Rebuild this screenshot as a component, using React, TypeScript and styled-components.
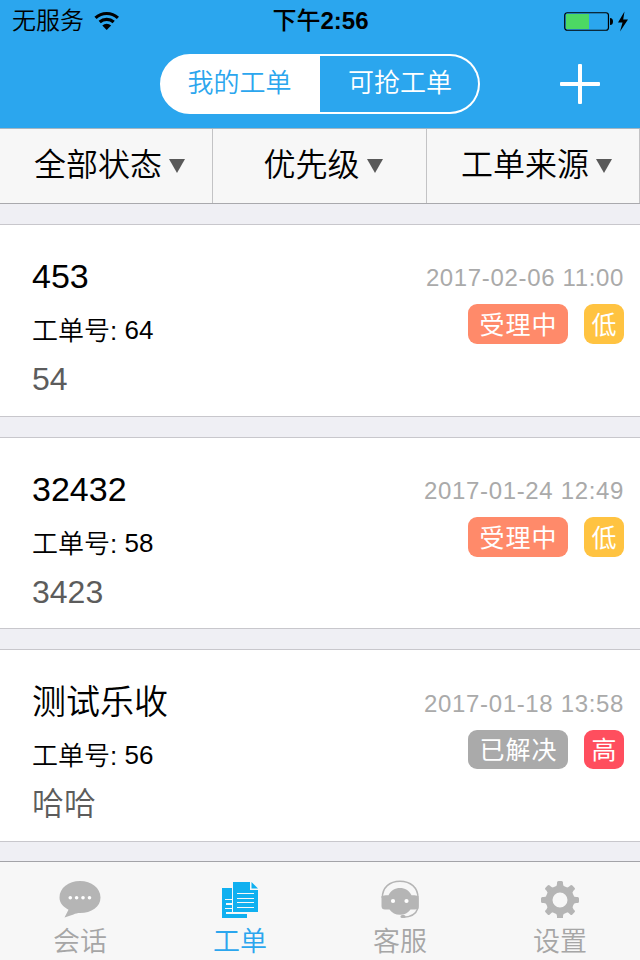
import React from "react";
import styled, { createGlobalStyle } from "styled-components";

const GlobalStyle = createGlobalStyle`
  * { box-sizing: border-box; }
  body {
    margin: 0;
    background: #efeff4;
    font-family: "Liberation Sans", "Noto Sans CJK SC", sans-serif;
    font-weight: 350;
  }
`;

const Screen = styled.div`
  width: 640px;
  height: 960px;
  overflow: hidden;
  display: flex;
  flex-direction: column;
  background: #efeff4;
`;

const Header = styled.header`
  height: 128px;
  flex: none;
  background: #2ba6ee;
`;

const StatusBar = styled.div`
  height: 40px;
  display: grid;
  grid-template-columns: 1fr auto 1fr;
  align-items: center;
  padding: 0 11px 0 12px;
  color: #000;
`;

const Carrier = styled.div`
  display: flex;
  align-items: center;
  gap: 10px;
  font-size: 24px;
  line-height: 40px;
`;

const Clock = styled.div`
  font-size: 24px;
  line-height: 38px;
  padding-bottom: 2px;
  font-weight: 700;
  font-family: "Liberation Sans", sans-serif;
  span {
    font-family: "Noto Sans CJK SC", sans-serif;
    font-weight: 500;
  }
`;

const Power = styled.div`
  display: flex;
  justify-content: flex-end;
  align-items: center;
`;

const NavBar = styled.nav`
  height: 88px;
  display: grid;
  grid-template-columns: 160px 320px 160px;
  align-items: start;
  padding-top: 14px;
`;

const Segments = styled.div`
  grid-column: 2;
  height: 60px;
  display: grid;
  grid-template-columns: 160px 160px;
`;

const Segment = styled.button<{ $active?: boolean }>`
  margin: 0;
  border: 2px solid #fff;
  font: inherit;
  font-size: 26px;
  line-height: 52px;
  background: ${(p) => (p.$active ? "#fff" : "transparent")};
  color: ${(p) => (p.$active ? "#2ba6ee" : "#fff")};
  &:first-child {
    padding: 0 1px 2px 0;
    border-radius: 30px 0 0 30px;
  }
  &:last-child {
    padding: 0 0 2px 2px;
    border-left: 0;
    border-radius: 0 30px 30px 0;
  }
`;

const AddButton = styled.button`
  border: 0;
  background: none;
  padding: 0;
  height: 60px;
  width: 40px;
  margin-left: 80px;
  display: flex;
  align-items: center;
`;

const Filters = styled.div`
  height: 76px;
  flex: none;
  display: grid;
  grid-template-columns: 213px 214px 213px;
  background: #f7f7f7;
  border-top: 1px solid #a5b6c2;
  border-bottom: 1px solid #a9a9ad;
`;

const Filter = styled.button`
  border: 0;
  border-right: 1px solid #c3c3c5;
  background: none;
  padding: 0 0 2px 7px;
  font: inherit;
  font-size: 32px;
  line-height: 68px;
  color: #000;
  display: flex;
  justify-content: center;
  align-items: center;
  gap: 7px;
`;

const Arrow = styled.i`
  width: 0;
  height: 0;
  margin-top: 2px;
  border: 8px solid transparent;
  border-top: 14px solid #595959;
  border-bottom: 0;
`;

const List = styled.main`
  flex: 1;
  display: grid;
  grid-template-rows: 193px 192px 193px;
  row-gap: 20px;
  padding-top: 20px;
`;

const Card = styled.article`
  display: flex;
  justify-content: space-between;
  background: #fff;
  border-top: 1px solid #c8c7cc;
  border-bottom: 1px solid #c8c7cc;
  padding: 30px 16px 0 32px;
`;

const Summary = styled.div`
  flex: none;
`;

const Title = styled.h2`
  margin: 0;
  height: 44px;
  font-size: 34px;
  line-height: 44px;
  font-weight: 350;
  color: #000;
`;

const TicketNo = styled.p`
  margin: 8px 0 0;
  height: 48px;
  font-size: 26px;
  line-height: 48px;
  color: #000;
`;

const Digits = styled.span`
  line-height: 1;
  vertical-align: 1px;
`;

const Detail = styled.p`
  margin: 2px 0 0;
  font-size: 32px;
  line-height: 44px;
  color: #5c5c5c;
`;

const Meta = styled.div`
  display: flex;
  flex-direction: column;
  align-items: flex-end;

  ${Card}:last-child & {
    padding-top: 1px;
  }
`;

const DateText = styled.time`
  font-size: 24px;
  line-height: 44px;
  padding-top: 1px;
  letter-spacing: 0.65px;
  color: #aaa;
`;

const Tags = styled.div`
  display: flex;
  gap: 16px;
  margin-top: 4px;
`;

const Tag = styled.span<{ $color: string; $wide?: boolean }>`
  width: ${(p) => (p.$wide ? 100 : 40)}px;
  height: 40px;
  border-radius: 9px;
  background: ${(p) => p.$color};
  color: #fff;
  font-size: 25px;
  font-weight: 400;
  line-height: 42px;
  letter-spacing: 1px;
  text-indent: 1px;
  text-align: center;

  ${Card}:last-child & {
    height: 39px;
    line-height: 40px;
  }
`;

const TabBar = styled.footer`
  height: 99px;
  flex: none;
  display: grid;
  grid-template-columns: repeat(4, 1fr);
  background: #f7f7f7;
  border-top: 1px solid #a3a3a8;
`;

const Tab = styled.button<{ $active?: boolean }>`
  border: 0;
  background: none;
  padding: 16px 0 0;
  font: inherit;
  font-size: 27px;
  line-height: 36px;
  display: flex;
  flex-direction: column;
  align-items: center;
  justify-content: flex-start;
  gap: 6px;
  color: ${(p) => (p.$active ? "#2ba6ee" : "#a6a6a6")};
  svg { flex: none; }
`;

const WifiIcon = () => (
  <svg width="26" height="20" viewBox="0 0 26 20">
    <g fill="none" stroke="#000" strokeWidth="3.2">
      <path d="M1.500 6.900 A16.500 16.500 0 0 1 23.900 6.900" />
      <path d="M5.700 11 A10.400 10.400 0 0 1 19.700 11" />
    </g>
    <path d="M12.700 19 L8.300 14.500 A6.300 6.300 0 0 1 17.100 14.500 Z" />
  </svg>
);

const BatteryIcon = () => (
  <svg width="65" height="22" viewBox="0 0 65 22">
    <rect x="0.75" y="2.75" width="43.7" height="17.5" rx="2.5" fill="none" stroke="#000" strokeWidth="1.2" />
    <rect x="2" y="4" width="23" height="15" fill="#4cd964" />
    <path d="M46 8 Q49 8 49 11.5 Q49 15 46 15 Z" />
    <path d="M60.5 1.5 L54 12.5 L58.5 12.5 L56 21.5 L64 9.5 L59.2 9.5 Z" />
  </svg>
);

const PlusIcon = () => (
  <svg width="40" height="40" viewBox="0 0 40 40" fill="#fff">
    <rect x="18" width="4" height="40" rx="1" />
    <rect y="18" width="40" height="4" rx="1" />
  </svg>
);

const ChatIcon = () => (
  <svg width="42" height="40" viewBox="0 0 42 40">
    <path
      fill="#b5b5b5"
      d="M21 3 C32.500 3 41.500 10 41.500 19.500 C41.500 29 32.500 35 21 35 C18.500 35 16.500 35.600 14.500 36.400 L5.500 39.500 L9.500 31.800 C4 28.500 0.500 25 0.500 19.500 C0.500 10 9.500 3 21 3 Z"
    />
    <g fill="#fff">
      <circle cx="11.300" cy="19.800" r="1.800" />
      <circle cx="17.600" cy="19.800" r="1.800" />
      <circle cx="24" cy="19.800" r="1.800" />
      <circle cx="30.500" cy="19.800" r="1.800" />
    </g>
  </svg>
);

const TicketIcon = () => (
  <svg width="40" height="40" viewBox="0 0 40 40">
    <path fill="#10b0f0" d="M2 10 H12 V36 H27 V40 H2 Z" />
    <g fill="#f7f7f7">
      <rect x="5" y="21" width="7" height="1" />
      <rect x="6" y="25" width="6" height="2" />
      <rect x="5" y="30" width="7" height="1" />
      <rect x="6" y="34" width="6" height="2" />
    </g>
    <path fill="#10b0f0" d="M13 4 H30 V12 H38 V34 H13 Z M31.500 4 L38 10.500 H31.500 Z" />
    <g fill="#f7f7f7">
      <rect x="17" y="15" width="17" height="1" />
      <rect x="17" y="20" width="17" height="1" />
      <rect x="17" y="24" width="17" height="1" />
      <rect x="17" y="29" width="17" height="1" />
    </g>
  </svg>
);

const AgentIcon = () => (
  <svg width="40" height="40" viewBox="0 0 40 40">
    <path
      fill="none"
      stroke="#b5b5b5"
      strokeWidth="1.500"
      d="M2.300 20 C2.300 9.500 9.500 3.200 20 3.200 C30.500 3.200 38 9.500 38 20 V30 C36 36 30 39.200 23 39.200"
    />
    <path
      fill="#b5b5b5"
      d="M1.500 18 L5.500 17.200 H8.500 C11 12.500 15 10 20 10 C25 10 29 12.500 31.500 17.200 H34.500 L38.500 18 V28 Q38 31.500 35 31.500 H30.500 C28 35 24.500 36.800 20 36.800 C15.500 36.800 12 35 9.500 31.500 H5 Q1.500 31.500 1.500 28 Z"
    />
    <rect x="20.500" y="37" width="5" height="3" rx="1.500" fill="#b5b5b5" />
    <circle cx="13" cy="23" r="2.100" fill="#fff" />
    <circle cx="26.500" cy="23" r="2.100" fill="#fff" />
  </svg>
);

const GearIcon = () => (
  <svg width="40" height="40" viewBox="0 0 40 40">
    <g transform="translate(20 22)" fill="#b5b5b5">
      <path
        fillRule="evenodd"
        d="M0 -14.300 A14.300 14.300 0 1 0 0 14.300 A14.300 14.300 0 1 0 0 -14.300 Z M0 -7.500 A7.500 7.500 0 1 1 0 7.500 A7.500 7.500 0 1 1 0 -7.500 Z"
      />
      {[0, 45, 90, 135, 180, 225, 270, 315].map((angle) => (
        <path
          key={angle}
          transform={`rotate(${angle})`}
          d="M-5.500 -12.500 Q-3 -13.500 -3 -16 V-17.500 Q-3 -19 -1.500 -19 H1.500 Q3 -19 3 -17.500 V-16 Q3 -13.500 5.500 -12.500 Z"
        />
      ))}
    </g>
  </svg>
);

const filters = ["全部状态", "优先级", "工单来源"];

const tickets = [
  { title: "453", no: 64, detail: "54", date: "2017-02-06 11:00", status: "受理中", statusColor: "#ff8a6a", level: "低", levelColor: "#ffc341" },
  { title: "32432", no: 58, detail: "3423", date: "2017-01-24 12:49", status: "受理中", statusColor: "#ff8a6a", level: "低", levelColor: "#ffc341" },
  { title: "测试乐收", no: 56, detail: "哈哈", date: "2017-01-18 13:58", status: "已解决", statusColor: "#aaaaaa", level: "高", levelColor: "#ff4e5e" },
];

const tabs = [
  { label: "会话", Icon: ChatIcon },
  { label: "工单", Icon: TicketIcon, active: true },
  { label: "客服", Icon: AgentIcon },
  { label: "设置", Icon: GearIcon },
];

export default function App() {
  return (
    <>
      <GlobalStyle />
      <Screen>
        <Header>
          <StatusBar>
            <Carrier>
              无服务
              <WifiIcon />
            </Carrier>
            <Clock>
              <span>下午</span>2:56
            </Clock>
            <Power>
              <BatteryIcon />
            </Power>
          </StatusBar>
          <NavBar>
            <Segments>
              <Segment $active>我的工单</Segment>
              <Segment>可抢工单</Segment>
            </Segments>
            <AddButton aria-label="新建">
              <PlusIcon />
            </AddButton>
          </NavBar>
        </Header>
        <Filters>
          {filters.map((label) => (
            <Filter key={label}>
              {label}
              <Arrow />
            </Filter>
          ))}
        </Filters>
        <List>
          {tickets.map((t) => (
            <Card key={t.no}>
              <Summary>
                <Title>{/^\d+$/.test(t.title) ? <Digits>{t.title}</Digits> : t.title}</Title>
                <TicketNo>
                  工单号: <Digits>{t.no}</Digits>
                </TicketNo>
                <Detail>{t.detail}</Detail>
              </Summary>
              <Meta>
                <DateText>{t.date}</DateText>
                <Tags>
                  <Tag $wide $color={t.statusColor}>{t.status}</Tag>
                  <Tag $color={t.levelColor}>{t.level}</Tag>
                </Tags>
              </Meta>
            </Card>
          ))}
        </List>
        <TabBar>
          {tabs.map(({ label, Icon, active }) => (
            <Tab key={label} $active={active}>
              <Icon />
              {label}
            </Tab>
          ))}
        </TabBar>
      </Screen>
    </>
  );
}
